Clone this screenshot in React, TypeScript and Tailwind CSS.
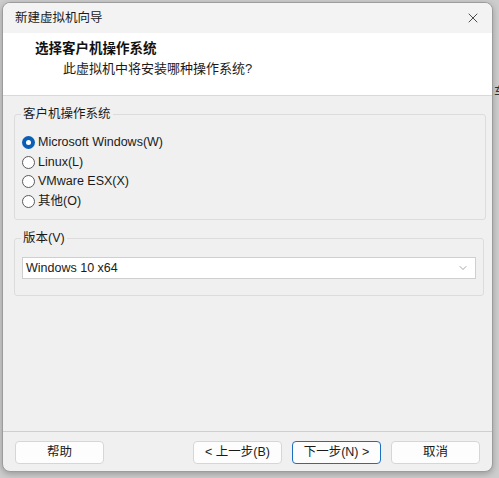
import { ChevronDown, X } from 'lucide-react'

const font = "font-['Segoe_UI','Liberation_Sans','Noto_Sans_CJK_SC',sans-serif]"

const osOptions = [
  { label: 'Microsoft Windows(W)', checked: true },
  { label: 'Linux(L)', checked: false },
  { label: 'VMware ESX(X)', checked: false },
  { label: '其他(O)', checked: false },
]

function Radio({ checked }: { checked: boolean }) {
  if (checked) {
    return (
      <span className="flex h-[13px] w-[13px] items-center justify-center rounded-full bg-[#0a5fb4]">
        <span className="h-[5px] w-[5px] rounded-full bg-white" />
      </span>
    )
  }
  return <span className="h-[13px] w-[13px] rounded-full border border-[#5a5a5a] bg-white" />
}

function GroupBox({ title, children, className }: { title: string; children: React.ReactNode; className?: string }) {
  return (
    <div className={`relative rounded-[3px] border border-[#dcdcdc] ${className ?? ''}`}>
      <span className="absolute left-[6px] top-[-10px] bg-[#f0f0f0] px-[2px] text-[12.5px] leading-[18px] text-[#1a1a1a]">
        {title}
      </span>
      {children}
    </div>
  )
}

function DialogButton({ children, primary }: { children: React.ReactNode; primary?: boolean }) {
  return (
    <button
      className={`flex h-[23px] w-[89px] items-center justify-center rounded-[4px] bg-[#fdfdfd] text-[12.5px] text-[#1a1a1a] ${
        primary ? 'border border-[#1a6fc0]' : 'border border-[#d6d6d6]'
      }`}
    >
      {children}
    </button>
  )
}

export default function App() {
  return (
    <div className={`flex h-[478px] w-[499px] overflow-hidden bg-[#cdcdcd] ${font}`}>
      <div className="ml-[2px] mt-[2px] flex h-[470px] w-[491px] shrink-0 flex-col overflow-hidden rounded-[8px] border border-[#9c9c9c] bg-[#f0f0f0] shadow-[0_2px_6px_rgba(0,0,0,0.25)]">
        {/* Title bar */}
        <div className="flex h-[30px] items-center justify-between bg-[#f3f3f3] pl-[12px] pr-[11px]">
          <span className="text-[12.5px] text-[#1a1a1a]">新建虚拟机向导</span>
          <X className="h-[16px] w-[16px] text-[#222]" strokeWidth={1.2} />
        </div>

        {/* Header */}
        <div className="h-[63px] border-b border-[#d9d9d9] bg-white pl-[32px] pt-[6px]">
          <div className="text-[13.5px] font-bold leading-[20px] text-[#111]">选择客户机操作系统</div>
          <div className="pl-[28px] text-[13px] leading-[20px] text-[#1a1a1a]">此虚拟机中将安装哪种操作系统?</div>
        </div>

        {/* Body */}
        <div className="flex flex-1 flex-col px-[11px] pt-[18px]">
          <GroupBox title="客户机操作系统" className="h-[106px] w-[472px]">
            <div className="flex flex-col pl-[7px] pt-[18px]">
              {osOptions.map((opt) => (
                <div key={opt.label} className="flex h-[19.5px] items-center gap-[3px]">
                  <Radio checked={opt.checked} />
                  <span className="text-[12.5px] text-[#1a1a1a]">{opt.label}</span>
                </div>
              ))}
            </div>
          </GroupBox>

          <GroupBox title="版本(V)" className="mt-[18px] h-[58px] w-[470px]">
            <div className="ml-[7px] mt-[18px] flex h-[22px] w-[454px] items-center justify-between border border-[#cfcfcf] bg-white pl-[3px] pr-[6px]">
              <span className="text-[12.5px] text-[#1a1a1a]">Windows 10 x64</span>
              <ChevronDown className="h-[12px] w-[12px] text-[#777]" strokeWidth={1.3} />
            </div>
          </GroupBox>
        </div>

        {/* Footer */}
        <div className="flex h-[40px] items-start justify-between border-t border-[#cfcfcf] px-[12px] pt-[9px]">
          <DialogButton>帮助</DialogButton>
          <div className="flex gap-[10px]">
            <DialogButton>&lt; 上一步(B)</DialogButton>
            <DialogButton primary>下一步(N) &gt;</DialogButton>
            <DialogButton>取消</DialogButton>
          </div>
        </div>
      </div>
      <div className="mt-[83px] overflow-hidden pl-[1px] text-[13px] leading-[18px] text-[#333]">车</div>
    </div>
  )
}
